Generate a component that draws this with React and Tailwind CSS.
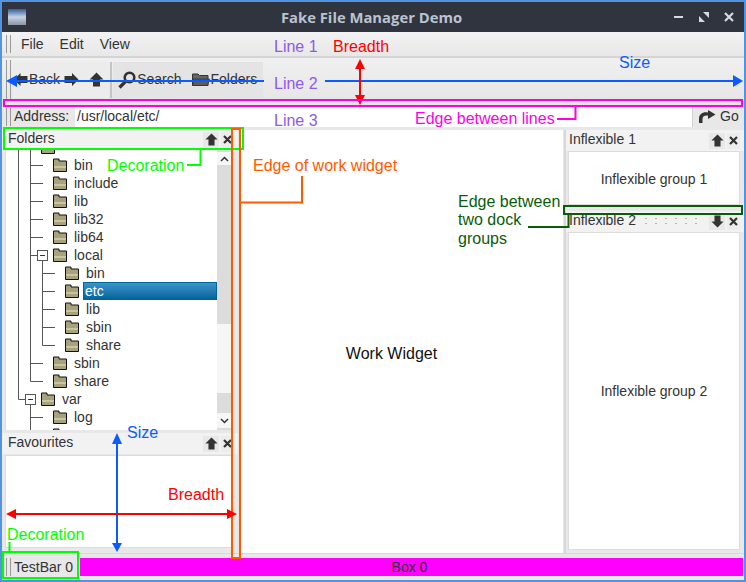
const FONT = "font-['Liberation_Sans',Arial,sans-serif]"

/* ── Icons ── */

function ArrowLeft() {
  return (
    <svg width="15" height="15" viewBox="0 0 15 15" className="shrink-0">
      <path d="M1 7.5 L7.5 1 V4 H14.5 V11 H7.5 V14 Z" fill="#333" />
    </svg>
  )
}

function ArrowRight() {
  return (
    <svg width="15" height="15" viewBox="0 0 15 15" className="shrink-0">
      <path d="M14.5 7.5 L8 1 V4 H0.5 V11 H8 V14 Z" fill="#333" />
    </svg>
  )
}

function ArrowUp({ size = 15 }) {
  return (
    <svg width={size} height={size} viewBox="0 0 15 15" className="shrink-0">
      <path d="M7.5 0.5 L14.5 7.5 H11 V14.5 H4 V7.5 H0.5 Z" fill="#333" />
    </svg>
  )
}

function ArrowDown({ size = 13 }) {
  return (
    <svg width={size} height={size} viewBox="0 0 15 15" className="shrink-0">
      <path d="M7.5 14.5 L14.5 7.5 H11 V0.5 H4 V7.5 H0.5 Z" fill="#333" />
    </svg>
  )
}

function CloseX() {
  return (
    <svg width="9" height="9" viewBox="0 0 9 9" className="shrink-0">
      <path d="M1 1 L8 8 M8 1 L1 8" stroke="#333" strokeWidth="2.2" />
    </svg>
  )
}

function Magnifier() {
  return (
    <svg width="18" height="18" viewBox="0 0 18 18" className="shrink-0">
      <circle cx="11.5" cy="6.5" r="4.8" fill="none" stroke="#333" strokeWidth="2.6" />
      <path d="M8 10 L1.5 16.5" stroke="#333" strokeWidth="3.2" />
    </svg>
  )
}

function BigFolder() {
  return (
    <svg width="18" height="15" viewBox="0 0 18 15" className="shrink-0">
      <path d="M0.5 2 H6 L7.5 3.5 H16 V13.5 H0.5 Z" fill="#666" stroke="#333" />
      <path d="M1 7 H17.5 L15.5 13.5 H1 Z" fill="#5c5c5c" stroke="#333" strokeWidth="0.8" />
    </svg>
  )
}

function GoArrow() {
  return (
    <svg width="18" height="14" viewBox="0 0 18 14" className="shrink-0">
      <path d="M1 13 H4.5 V9 C4.5 6 7 5 10 5.5 V9 L17.5 4.5 L10 0 V2.5 C5 1.5 1 4 1 9 Z" fill="#333" />
    </svg>
  )
}

function TreeFolder() {
  return (
    <svg width="14" height="14" viewBox="0 0 14 14" className="shrink-0">
      <path d="M0.5 1 H6 V3 H13.5 V13.5 H0.5 Z" fill="#a8a27c" stroke="#111" />
      <rect x="1" y="8" width="12" height="2" fill="#c8c4a4" />
    </svg>
  )
}

/* ── Pieces ── */

function Grip({ h }) {
  return <div className={`w-[5px] shrink-0 border-x border-[#999] ${h}`} />
}

function DockTitle({ label, down, handle, pl = 'pl-[6px]' }) {
  return (
    <div className={`flex items-center h-[21px] shrink-0 pr-[4px] bg-[#f2f2f2] text-[14px] text-[#333] ${pl}`}>
      <span className="-mt-[3px]">{label}</span>
      {handle ? (
        <div className="flex-1 ml-[5px] mr-[6px] h-[11px] bg-[radial-gradient(#b4b4b4_1px,transparent_1px)] bg-size-[10px_5px]" />
      ) : (
        <div className="flex-1" />
      )}
      <div className="flex items-center justify-center w-[16px] h-[16px] bg-[#e8e8e8]">
        {down ? <ArrowDown /> : <ArrowUp size={13} />}
      </div>
      <div className="flex items-center justify-center w-[13px] h-[16px] ml-[2px] bg-[#ececec]">
        <CloseX />
      </div>
    </div>
  )
}

const TREE = [
  ['', 1],
  ['bin', 2],
  ['include', 2],
  ['lib', 2],
  ['lib32', 2],
  ['lib64', 2],
  ['local', 2],
  ['bin', 3],
  ['etc', 3, true],
  ['lib', 3],
  ['sbin', 3],
  ['share', 3],
  ['sbin', 2],
  ['share', 2],
  ['var', 1],
  ['log', 2],
  ['', 2],
]

const INDENT = { 1: 'pl-[35px]', 2: 'pl-[47px]', 3: 'pl-[59px]' }

function TreeGuides() {
  const g = 'M12.5 0 V249.5 H19 M24.5 0 V231.5 H37 M24.5 15.5 H37 M24.5 33.5 H37 M24.5 51.5 H37 M24.5 69.5 H37 M24.5 87.5 H37 M24.5 105.5 H31 M24.5 213.5 H37 M36.5 110 V195.5 H49 M36.5 123.5 H49 M36.5 141.5 H49 M36.5 159.5 H49 M36.5 177.5 H49 M24.5 254 V280 M24.5 267.5 H37'
  return (
    <svg width="60" height="280" className="absolute left-0 top-0 pointer-events-none">
      <path d={g} fill="none" stroke="#555" />
      <rect x="31.5" y="100.5" width="10" height="10" fill="#fff" stroke="#555" />
      <path d="M34 105.5 H39" stroke="#333" />
      <rect x="19.5" y="244.5" width="10" height="10" fill="#fff" stroke="#555" />
      <path d="M22 249.5 H27" stroke="#333" />
    </svg>
  )
}

function TreeRow({ label, level, selected }) {
  return (
    <div className={`flex items-center h-[18px] shrink-0 ${INDENT[level]}`}>
      <TreeFolder />
      <span
        className={`ml-[4px] h-[18px] text-[14px] ${
          selected
            ? 'flex-1 px-[1px] text-white bg-linear-to-b from-[#3a94c8] to-[#00659c] border border-[#00659c] leading-[16px]'
            : 'px-[3px] leading-[18px] text-[#333]'
        }`}
      >
        {label}
      </span>
    </div>
  )
}

function Scrollbar() {
  return (
    <div className="flex flex-col w-[15px] shrink-0 bg-[#dcdcdc]">
      <div className="flex items-center justify-center h-[13px] mt-[2px] bg-[#f6f6f6] text-[#333]">
        <svg width="9" height="6" viewBox="0 0 9 6"><path d="M1 5 L4.5 1.5 L8 5" fill="none" stroke="#333" strokeWidth="1.5" /></svg>
      </div>
      <div className="h-[159px]" />
      <div className="h-[69px] bg-[#f6f6f6]" />
      <div className="flex-1" />
      <div className="flex items-center justify-center h-[15px] mb-[2px] bg-[#f6f6f6]">
        <svg width="9" height="6" viewBox="0 0 9 6"><path d="M1 1 L4.5 4.5 L8 1" fill="none" stroke="#333" strokeWidth="1.5" /></svg>
      </div>
    </div>
  )
}

/* ── Annotations, drawn over the window ── */

function Label({ className, children }) {
  return (
    <span className={`absolute leading-[16px] text-[16px] whitespace-nowrap ${className}`}>
      {children}
    </span>
  )
}

function Annotations() {
  return (
    <>
      <svg width="746" height="582" className="absolute left-0 top-0 pointer-events-none">
        {/* blue: toolbar size */}
        <path d="M10 81 H264 M325 81 H736" stroke="#0b5cff" strokeWidth="2" />
        <path d="M6 81 L17 75 V87 Z M743 81 L733 75 V87 Z" fill="#0b5cff" />
        {/* red: line breadth */}
        <path d="M360 64 V100" stroke="#f00" strokeWidth="2" />
        <path d="M360 59 L355 69 H365 Z M360 105 L355 95 H365 Z" fill="#f00" />
        {/* magenta: edge between lines */}
        <rect x="4" y="100" width="738" height="6" fill="none" stroke="#ff00e0" strokeWidth="2" />
        <path d="M557 119 H575.5 V106" fill="none" stroke="#ff00e0" strokeWidth="2" />
        {/* green: decoration */}
        <rect x="4" y="128" width="239" height="21" fill="none" stroke="#0f0" strokeWidth="2" />
        <path d="M187 165 H200.5 V150" fill="none" stroke="#0f0" strokeWidth="2" />
        <rect x="3" y="552" width="75" height="26" fill="none" stroke="#0f0" strokeWidth="2" />
        <path d="M9.5 542 V552" stroke="#0f0" strokeWidth="2" />
        {/* orange: edge of work widget */}
        <rect x="232" y="129" width="8" height="429" fill="none" stroke="#ff5a00" strokeWidth="2" />
        <path d="M240 202.5 H302" stroke="#ff5a00" strokeWidth="2" />
        <path d="M302 203.5 V176" stroke="#ff5a00" strokeWidth="2" />
        {/* dark green: edge between dock groups */}
        <rect x="564" y="206" width="178" height="8" fill="none" stroke="#0a5c0a" strokeWidth="2" />
        <path d="M528 227 H568.5 V214" fill="none" stroke="#0a5c0a" strokeWidth="2" />
        {/* blue: dock size */}
        <path d="M117 440 V548" stroke="#0b5cff" strokeWidth="2" />
        <path d="M117 433 L112 444 H122 Z M117 552 L112 543 H122 Z" fill="#0b5cff" />
        {/* red: dock breadth */}
        <path d="M10 514 H232" stroke="#f00" strokeWidth="2" />
        <path d="M6 514 L16 509 V519 Z M237 514 L227 509 V519 Z" fill="#f00" />
      </svg>
      <Label className="left-[274px] top-[39px] text-[#9059e8]">Line 1</Label>
      <Label className="left-[274px] top-[76px] text-[#9059e8]">Line 2</Label>
      <Label className="left-[274px] top-[113px] text-[#9059e8]">Line 3</Label>
      <Label className="left-[333px] top-[39px] text-[#f00]">Breadth</Label>
      <Label className="left-[619px] top-[55px] text-[#0b5cff]">Size</Label>
      <Label className="left-[415px] top-[111px] text-[#ff00e0]">Edge between lines</Label>
      <Label className="left-[107px] top-[158px] text-[#0f0]">Decoration</Label>
      <Label className="left-[253px] top-[158px] text-[#ff5a00]">Edge of work widget</Label>
      <Label className="left-[458px] top-[194px] text-[#0a5c0a]">Edge between</Label>
      <Label className="left-[458px] top-[212px] text-[#0a5c0a]">two dock</Label>
      <Label className="left-[458px] top-[231px] text-[#0a5c0a]">groups</Label>
      <Label className="left-[127px] top-[425px] text-[#0b5cff]">Size</Label>
      <Label className="left-[168px] top-[487px] text-[#f00]">Breadth</Label>
      <Label className="left-[7px] top-[527px] text-[#0f0]">Decoration</Label>
    </>
  )
}

/* ── Main window ── */

export default function App() {
  return (
    <div className={`relative w-[746px] h-[582px] overflow-hidden flex flex-col p-[2px] bg-[#5294e2] ${FONT}`}>
      {/* title bar */}
      <div className="flex items-center h-[30px] shrink-0 bg-[#2f343f] text-[#bac3cf]">
        <div className="flex-1">
          <div className="ml-[6px] w-[18px] h-[16px] bg-linear-to-b from-[#2f5f9e] via-[#c8d4e4] to-[#8a96a6]" />
        </div>
        <div className="pl-[6px] text-[14.8px] font-bold font-['Open_Sans',sans-serif]">
          Fake File Manager Demo
        </div>
        <div className="flex-1 flex items-center justify-end gap-[13px] pr-[9px]">
          <svg width="12" height="12" viewBox="0 0 12 12"><path d="M1 6 H10" stroke="#d3dae3" strokeWidth="2" /></svg>
          <svg width="12" height="12" viewBox="0 0 12 12"><path d="M1 11 V5 L7 11 Z M11 1 V7 L5 1 Z" fill="#d3dae3" /></svg>
          <svg width="12" height="12" viewBox="0 0 12 12"><path d="M2 2 L10 10 M10 2 L2 10" stroke="#d3dae3" strokeWidth="2.2" /></svg>
        </div>
      </div>

      <div className="flex-1 flex flex-col min-h-0 bg-[#e8e8e8] text-[#333]">
        {/* line 1: menu */}
        <div className="flex items-center h-[26px] shrink-0 pl-[4px] border-b-2 border-[#d4d4d4] bg-linear-to-b from-[#f2f2f2] to-[#e8e8e8] text-[14px]">
          <Grip h="h-[18px]" />
          <div className="flex gap-[16px] ml-[10px] pt-[1px]">
            <span>File</span>
            <span>Edit</span>
            <span>View</span>
          </div>
        </div>

        {/* line 2: toolbar */}
        <div className="flex items-center h-[43px] shrink-0 pl-[4px] bg-linear-to-b from-[#f0f0f0] to-[#e6e6e6] text-[14px]">
          <Grip h="h-[40px]" />
          <div className="flex items-center ml-[2px] h-[36px] pr-[5px] bg-[#ececec]">
            <ArrowLeft />
            <span className="ml-[1px]">Back</span>
            <span className="ml-[4px]"><ArrowRight /></span>
            <span className="ml-[10px]"><ArrowUp /></span>
          </div>
          <div className="w-[2px] h-[36px] mx-[1px] bg-[#c4c4c4]" />
          <div className="flex items-center h-[36px] pl-[5px] pr-[6px] bg-[#e4e4e4]">
            <Magnifier />
            <span className="ml-[1px]">Search</span>
            <span className="ml-[11px]"><BigFolder /></span>
            <span>Folders</span>
          </div>
        </div>

        {/* edge between lines */}
        <div className="h-[5px] shrink-0 bg-[#e4e4e4]" />

        {/* line 3: address */}
        <div className="flex items-center h-[21px] shrink-0 pl-[4px] bg-[#e8e8e8] text-[14px]">
          <Grip h="h-[18px]" />
          <span className="ml-[3px] w-[58px] shrink-0">Address:</span>
          <div className="flex-1 h-full pl-[2px] ml-[3px] bg-white leading-[20px]">/usr/local/etc/</div>
          <div className="flex items-center gap-[4px] w-[52px] h-full pl-[5px] border-l border-[#d0d0d0]">
            <GoArrow />
            <span>Go</span>
          </div>
        </div>

        {/* main area */}
        <div className="flex flex-1 min-h-0 pt-[2px]">
          {/* left dock */}
          <div className="flex flex-col w-[236px] shrink-0 text-[14px]">
            <DockTitle label="Folders" />
            <div className="flex h-[280px] shrink-0 ml-[3px] mr-[6px] bg-white overflow-hidden border-l border-[#dcdcdc]">
              <div className="relative flex-1 min-w-0 overflow-hidden">
                <TreeGuides />
                <div className="relative flex flex-col -mt-[12px]">
                  {TREE.map((row, i) => (
                    <TreeRow key={i} label={row[0]} level={row[1]} selected={row[2]} />
                  ))}
                </div>
              </div>
              <Scrollbar />
            </div>
            <div className="h-[3px] shrink-0" />
            <DockTitle label="Favourites" />
            <div className="flex-1 ml-[3px] mr-[5px] mb-[5px] mt-[1px] bg-white border border-[#dcdcdc]" />
          </div>

          {/* splitter */}
          <div className="w-[2px] shrink-0 bg-[#e4e4e4]" />

          {/* work widget */}
          <div className="flex items-center justify-center w-[323px] shrink-0 mt-[1px] pr-[20px] pt-[24px] bg-white text-[16px] text-[#111]">
            Work Widget
          </div>

          {/* right dock */}
          <div className="flex flex-col flex-1 min-w-0 mt-[1px] ml-[1px] border-l-2 border-[#d8d8d8] text-[14px]">
            <DockTitle label="Inflexible 1" pl="pl-[3px]" />
            <div className="flex items-center justify-center h-[54px] shrink-0 ml-[2px] mr-[4px] pt-[3px] bg-white border border-[#dcdcdc]">
              Inflexible group 1
            </div>
            <div className="h-[6px] shrink-0" />
            <DockTitle label="Inflexible 2" down handle pl="pl-[3px]" />
            <div className="flex items-center justify-center flex-1 ml-[2px] mr-[4px] mb-[3px] bg-white border border-[#dcdcdc]">
              Inflexible group 2
            </div>
          </div>
        </div>

        {/* status line */}
        <div className="flex items-center h-[27px] shrink-0 border-t border-[#d8d8d8] pl-[4px] pr-[1px] text-[14px]">
          <Grip h="h-[18px]" />
          <span className="ml-[3px] w-[66px] shrink-0">TestBar 0</span>
          <div className="flex items-center justify-center flex-1 h-[18px] bg-[#ff00ff] pr-[4px] text-[#333] leading-none">
            Box 0
          </div>
        </div>
      </div>

      <Annotations />
    </div>
  )
}
